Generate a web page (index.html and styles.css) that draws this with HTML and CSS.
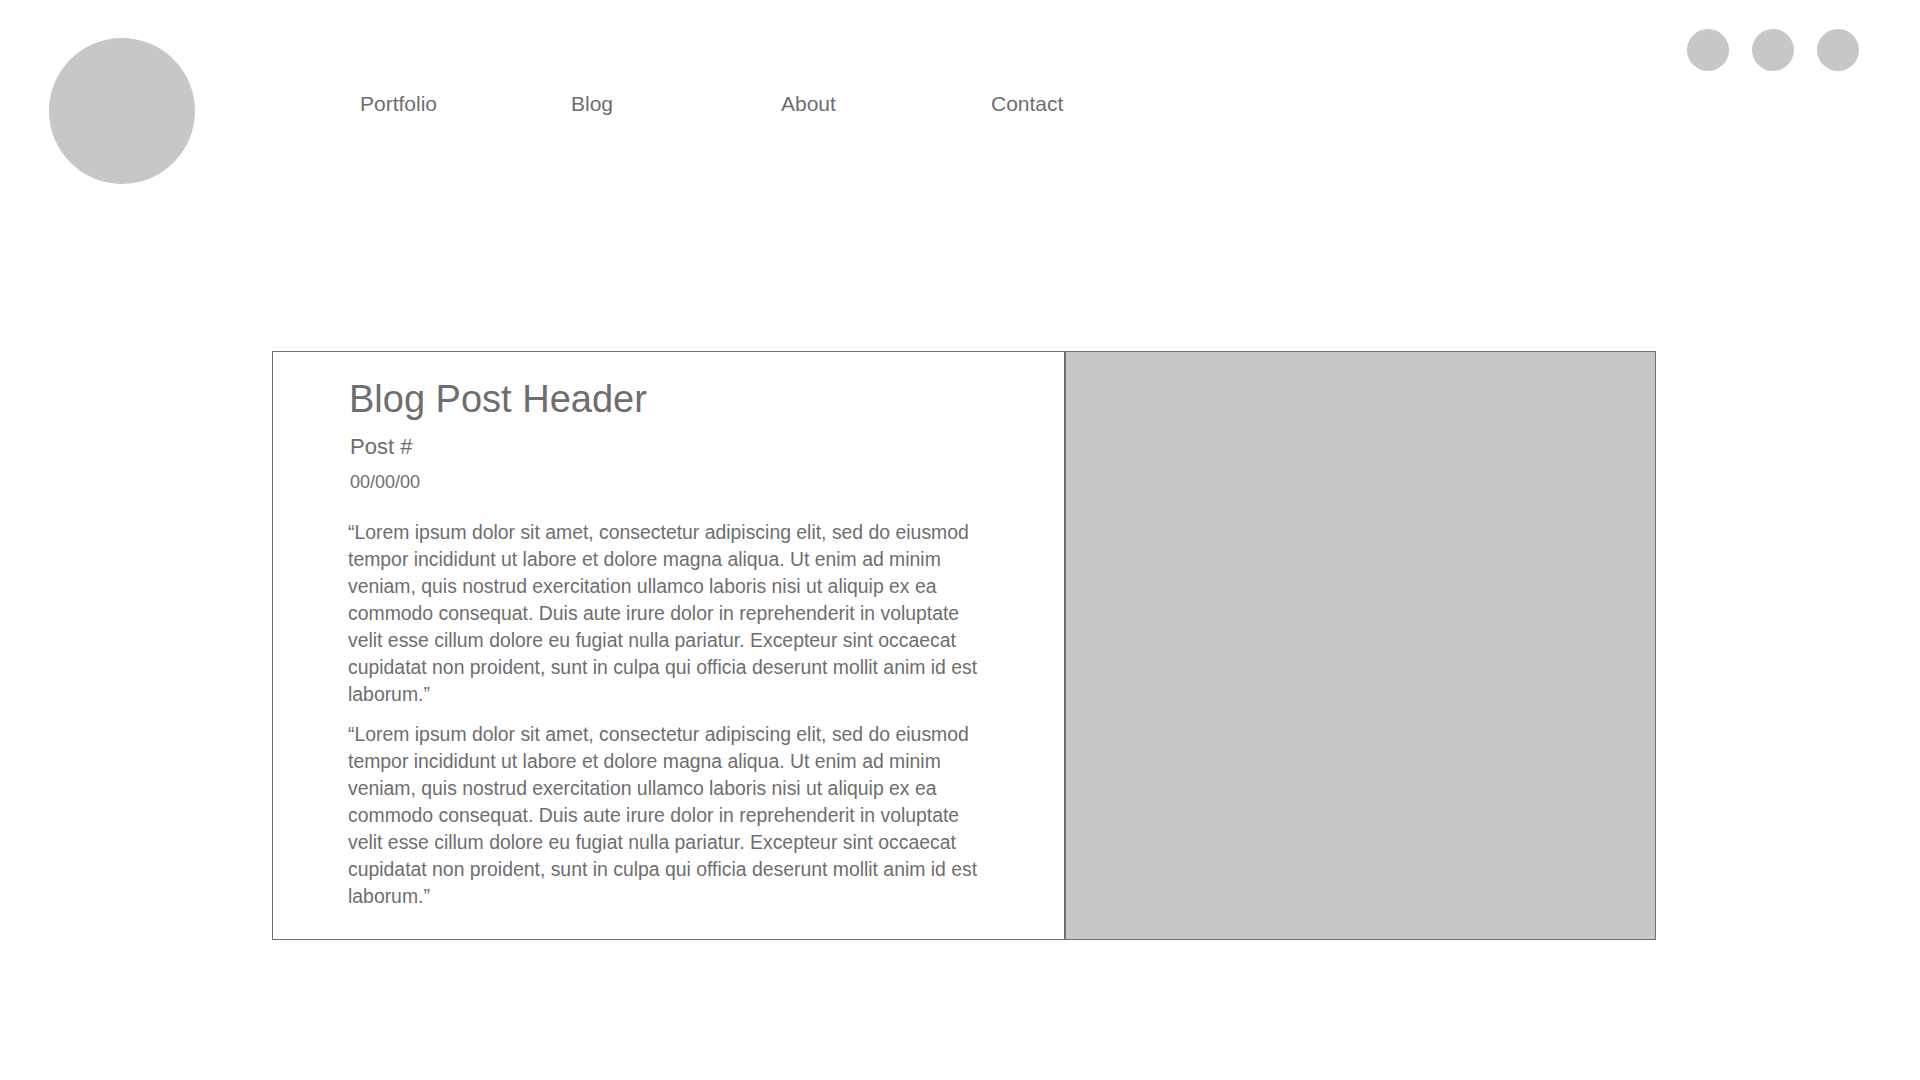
FILE: index.html
```html
<!DOCTYPE html>
<html lang="en">
<head>
<meta charset="utf-8">
<title>Blog Post</title>
<link rel="stylesheet" href="styles.css">
</head>
<body>
<header class="site-header">
  <div class="logo"></div>
  <nav class="main-nav">
    <a class="nav-link nav-portfolio" href="#">Portfolio</a>
    <a class="nav-link" href="#">Blog</a>
    <a class="nav-link" href="#">About</a>
    <a class="nav-link" href="#">Contact</a>
  </nav>
  <div class="social">
    <span class="social-dot"></span>
    <span class="social-dot"></span>
    <span class="social-dot"></span>
  </div>
</header>
<main class="post-card">
  <article class="post-body">
    <h1 class="post-title">Blog Post Header</h1>
    <h2 class="post-number">Post #</h2>
    <p class="post-date">00/00/00</p>
    <p class="post-text">“Lorem ipsum dolor sit amet, consectetur adipiscing elit, sed do eiusmod tempor incididunt ut labore et dolore magna aliqua. Ut enim ad minim veniam, quis nostrud exercitation ullamco laboris nisi ut aliquip ex ea commodo consequat. Duis aute irure dolor in reprehenderit in voluptate velit esse cillum dolore eu fugiat nulla pariatur. Excepteur sint occaecat cupidatat non proident, sunt in culpa qui officia deserunt mollit anim id est laborum.”</p>
    <p class="post-text">“Lorem ipsum dolor sit amet, consectetur adipiscing elit, sed do eiusmod tempor incididunt ut labore et dolore magna aliqua. Ut enim ad minim veniam, quis nostrud exercitation ullamco laboris nisi ut aliquip ex ea commodo consequat. Duis aute irure dolor in reprehenderit in voluptate velit esse cillum dolore eu fugiat nulla pariatur. Excepteur sint occaecat cupidatat non proident, sunt in culpa qui officia deserunt mollit anim id est laborum.”</p>
  </article>
  <div class="post-image"></div>
</main>
</body>
</html>
```

FILE: styles.css
```css
html, body {
  margin: 0;
  padding: 0;
  background: #ffffff;
}

body {
  font-family: "Liberation Sans", Arial, Helvetica, sans-serif;
  color: #6e6e6e;
  width: 1920px;
  height: 1080px;
  overflow: hidden;
}

.site-header {
  display: flex;
  align-items: flex-start;
  padding: 29px 61px 0 49px;
}

.logo {
  width: 146px;
  height: 146px;
  margin-top: 9px;
  border-radius: 50%;
  background: #c7c7c7;
  flex: none;
}

.main-nav {
  display: flex;
  margin-left: 165px;
  margin-top: 63px;
}

.nav-link {
  display: block;
  width: 210px;
  font-size: 21px;
  line-height: 24px;
  color: #6e6e6e;
  text-decoration: none;
}

.nav-portfolio {
  width: 211px;
}

.social {
  display: flex;
  gap: 23px;
  margin-left: auto;
}

.social-dot {
  display: block;
  width: 42px;
  height: 42px;
  border-radius: 50%;
  background: #c7c7c7;
}

.post-card {
  display: flex;
  width: 1384px;
  box-sizing: border-box;
  margin: 167px 0 0 272px;
  border: 1px solid #707070;
}

.post-body {
  width: 791px;
  box-sizing: border-box;
  padding: 25px 0 29px 75px;
}

.post-title {
  margin: 0 0 0 1px;
  font-size: 38px;
  line-height: 44px;
  font-weight: normal;
}

.post-number {
  margin: 13px 0 0 2px;
  font-size: 22px;
  line-height: 26px;
  font-weight: normal;
}

.post-date {
  margin: 11px 0 0 2px;
  font-size: 18px;
  line-height: 22px;
}

.post-text {
  max-width: 642px;
  margin: 26px 0 0 0;
  font-size: 19.4px;
  line-height: 27px;
}

.post-text + .post-text {
  margin-top: 13px;
}

.post-image {
  flex: 1;
  background: #c7c7c7;
  border-left: 2px solid #707070;
}
```
